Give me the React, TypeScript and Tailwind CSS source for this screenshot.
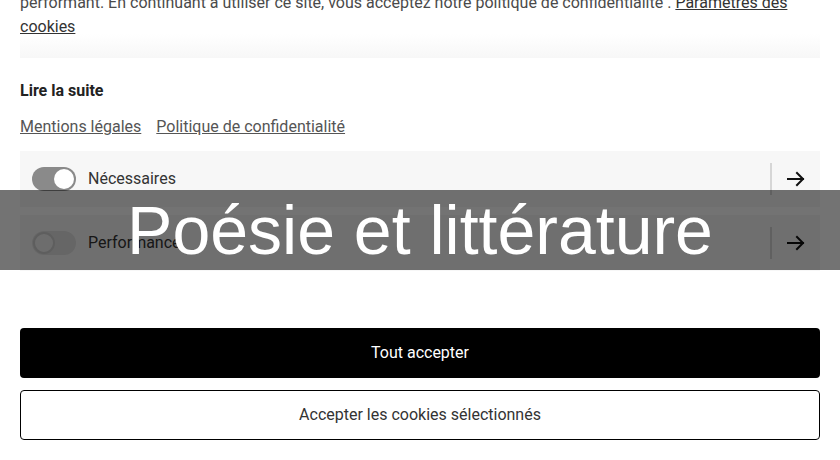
import React from "react";

function Arrow() {
  return (
    <svg width="20" height="20" viewBox="0 0 20 20" fill="none" stroke="#111" strokeWidth="2" strokeLinecap="square">
      <path d="M2 10 H17" />
      <path d="M11 4 L17 10 L11 16" />
    </svg>
  );
}

function Row({ label, on }: { label: string; on: boolean }) {
  return (
    <div className="flex h-14 items-center bg-[#f7f7f7] pl-3 pr-[14px]">
      {on ? (
        <div className="flex h-6 w-11 items-center justify-end rounded-full bg-[#8a8a8a] px-[2px]">
          <div className="h-5 w-5 rounded-full bg-white" />
        </div>
      ) : (
        <div className="flex h-6 w-11 items-center justify-start rounded-full bg-[#e2e2e2] px-[1px]">
          <div className="h-[22px] w-[22px] rounded-full border-2 border-[#d0d0d0] bg-[#f2f2f2]" />
        </div>
      )}
      <span className="ml-3 text-base text-[#333]">{label}</span>
      <div className="ml-auto h-8 w-[2px] bg-[#d6d6d6]" />
      <div className="ml-[14px] flex items-center">
        <Arrow />
      </div>
    </div>
  );
}

export default function App() {
  return (
    <div className="relative h-[460px] w-[840px] overflow-hidden bg-white font-['Roboto',sans-serif]">
      <div className="flex flex-col px-5">
        <p className="-mt-[9px] text-base leading-6 text-[#4a4a4a]">
          performant. En continuant à utiliser ce site, vous acceptez notre politique de confidentialité .{" "}
          <span className="text-[#333] underline">Paramètres des cookies</span>
        </p>
        <div className="-mt-[5px] h-6 bg-gradient-to-b from-white to-[#f7f7f7]" />
        <div className="mt-[21px] text-base font-bold leading-6 text-[#222]">Lire la suite</div>
        <div className="mt-3 flex gap-[15px] text-base leading-6 text-[#555]">
          <span className="underline">Mentions légales</span>
          <span className="underline">Politique de confidentialité</span>
        </div>
        <div className="mt-[12px] flex flex-col gap-2">
          <Row label="Nécessaires" on={true} />
          <Row label="Performance" on={false} />
        </div>
        <div className="mt-[57px] flex flex-col gap-3">
          <button className="h-[50px] w-full rounded-[4px] bg-black text-base text-white">Tout accepter</button>
          <button className="h-[50px] w-full rounded-[4px] border border-black bg-white text-base text-[#333]">
            Accepter les cookies sélectionnés
          </button>
        </div>
      </div>
      <div className="absolute left-0 top-[190px] h-[80px] w-full bg-black/55 text-center font-['Liberation_Sans',Arial,sans-serif] text-[68px] leading-[80px] text-white">
        Poésie et littérature
      </div>
    </div>
  );
}
